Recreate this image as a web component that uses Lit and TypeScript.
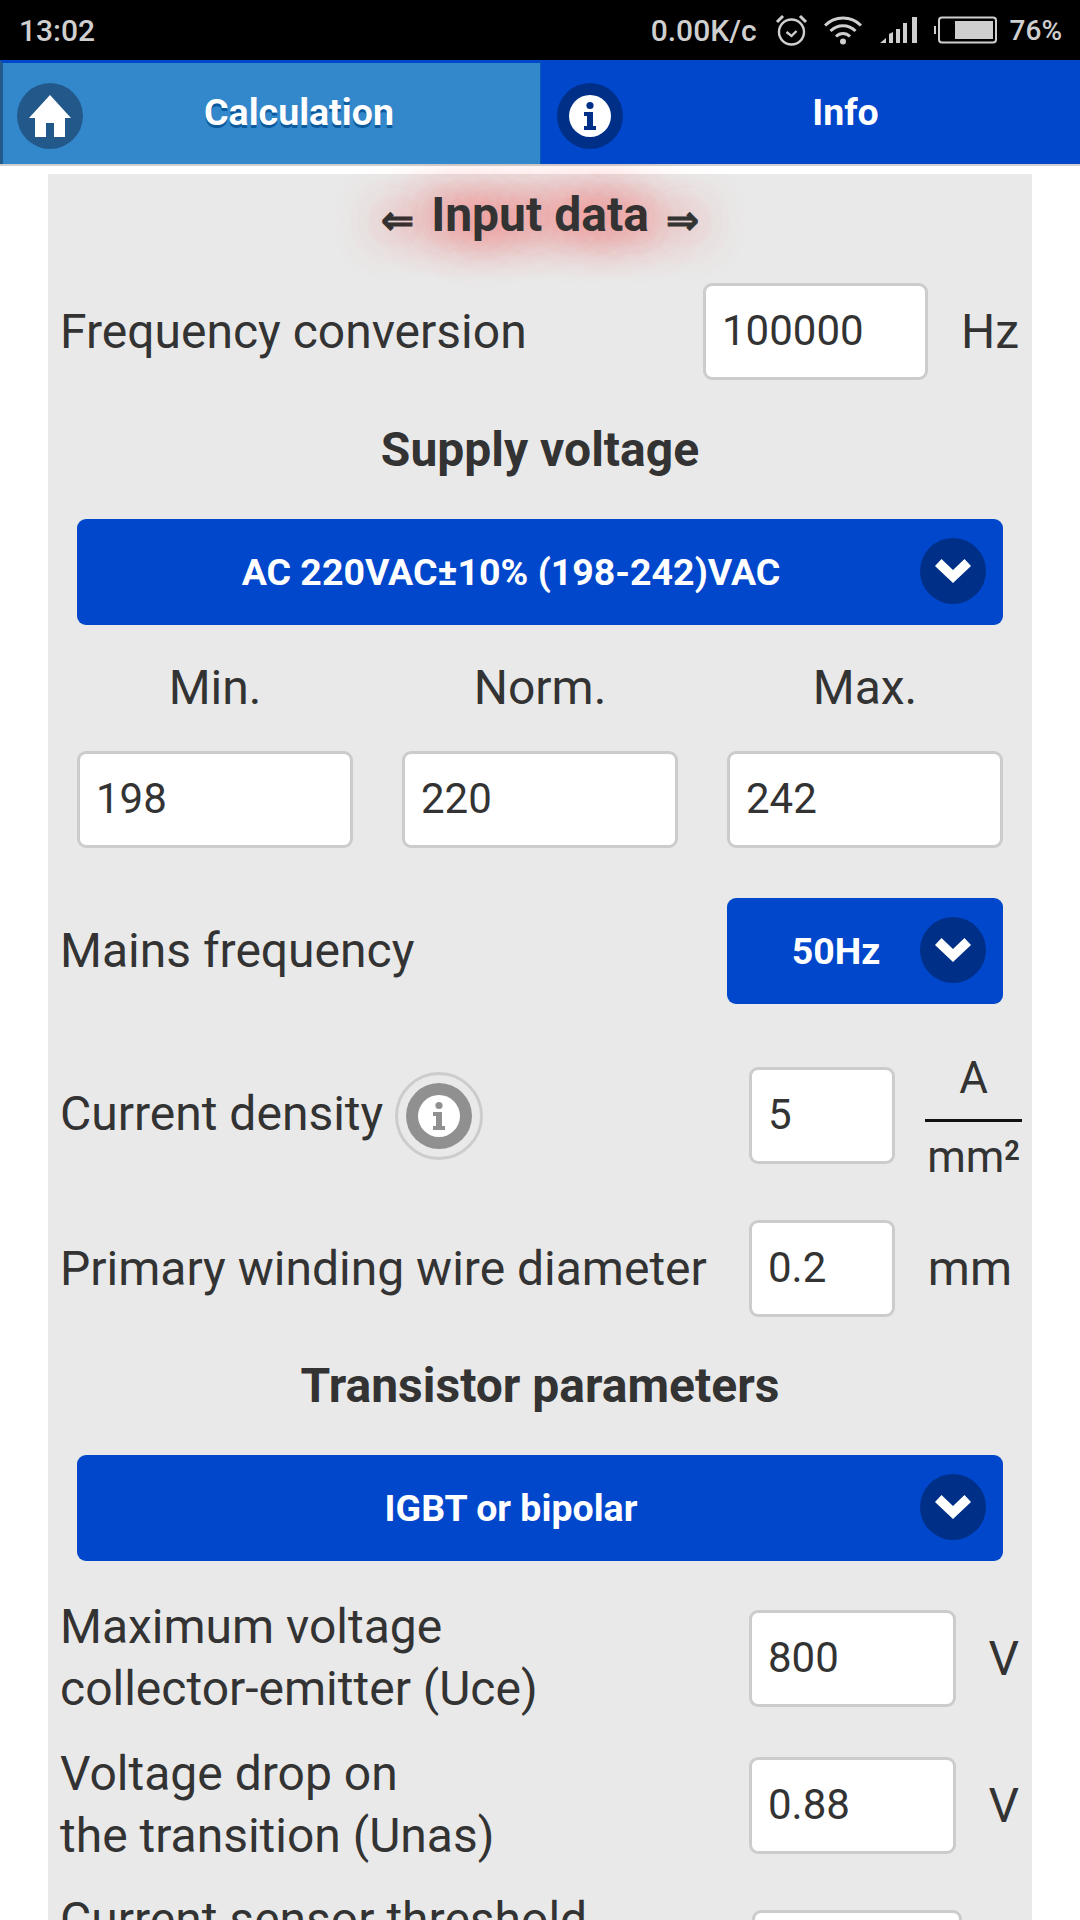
import { LitElement, html, css, svg } from "lit";
import { customElement } from "lit/decorators.js";

const infoGlyph = (bg: string, fg: string) => svg`
  <circle cx="21" cy="21" r="21" fill="${bg}"/>
  <circle cx="21" cy="10.5" r="3.6" fill="${fg}"/>
  <path d="M15 17h9v14h3v4H15v-4h3V21h-3z" fill="${fg}"/>`;

const chevron = html`<span class="chev"><svg width="36" height="24" viewBox="0 0 36 24"><path d="M18 24 0 7l6.5-7L18 11 29.500 0 36 7z" fill="#fff"/></svg></span>`;

@customElement("app-root")
export class AppRoot extends LitElement {
  static styles = css`
    :host { display: block; width: 1080px; height: 1920px; overflow: hidden; background: #fff;
      font-family: Roboto, "Noto Sans", sans-serif; color: #333; font-size: 48px; }
    .status { height: 60px; background: #000; color: #cfcfcf; font-size: 30px; font-weight: 500;
      display: flex; align-items: center; padding: 0 18px 0 19px; box-sizing: border-box; }
    .status .time { margin-right: auto; }
    .status svg { display: block; }
    .speed { margin-right: 18px; }
    .alarm { margin-right: 16px; }
    .wifi { margin-right: 18px; }
    .sig { margin-right: 16px; }
    .batt { margin-right: 12px; }
    .pct { font-size: 28px; }
    .nav { display: flex; height: 106px; box-sizing: border-box; border-bottom: 2px solid #cfcfcf; }
    .tab { flex: 0 0 540px; display: flex; align-items: center; justify-content: center; position: relative;
      box-sizing: border-box; border-top: 3px solid #0047cc; font-weight: 700; font-size: 37.5px; color: #fff; padding-bottom: 3px; }
    .tab.on { background: #3388cc; border-left: 3px solid #22598a; padding-left: 55px; text-shadow: 0 3px 0 #0b5a9e; }
    .tab.off { background: #0047cc; padding-left: 70px; border-left: 1px solid #0a5ab5; }
    .tab .ic { position: absolute; top: 20px; width: 66px; height: 66px; border-radius: 50%;
      display: flex; align-items: center; justify-content: center; }
    .tab.on .ic { left: 14px; background: #22598a; }
    .tab.off .ic { left: 16px; background: #002f87; }
    .gap { height: 8px; }
    .panel { width: 984px; margin-left: 48px; height: 1800px; background: #e9e9e9; display: flex; flex-direction: column; }
    .panel > * { flex: none; }
    .hd { height: 80px; display: flex; align-items: center; justify-content: center; font-weight: 700; font-size: 48px;
      text-shadow: 0 0 40px rgba(255,70,70,.55), 0 0 44px rgba(255,70,70,.55), 0 0 48px rgba(255,70,70,.5); }
    .hd .arr { font-family: "DejaVu Sans", sans-serif; font-weight: 700; font-size: 40px; margin: 11px 17px 0; -webkit-text-stroke: .8px #333; }
    .title { height: 60px; display: flex; align-items: center; justify-content: center; font-weight: 700; font-size: 48px; }
    .row { display: flex; align-items: center; padding: 0 13px 0 12px; }
    .label { line-height: 62px; letter-spacing: 0; }
    .label.up { padding-bottom: 3px; }
    .field { box-sizing: border-box; height: 97px; border: 3px solid #ccc; border-radius: 9px; background: #fff;
      font: 400 42px Roboto, sans-serif; color: #333; padding: 0 16px 2px; margin: 0; outline: none; display: block; min-width: 0; }
    .push { margin-left: auto; }
    .w225 { width: 225px; }
    .w146 { width: 146px; }
    .w207 { width: 207px; }
    .w210 { width: 210px; margin-right: 57px; }
    .unit { text-align: right; flex: none; }
    .u91 { width: 91px; }
    .u124 { width: 124px; padding-right: 7px; box-sizing: border-box; }
    .u63 { width: 63px; }
    .frac { width: 97px; margin: -13px -3px -17px 30px; flex: none; text-align: center; line-height: 1; font-size: 44px; }
    .frac .a { height: 64px; display: flex; align-items: center; justify-content: center; padding-bottom: 18px; box-sizing: border-box; }
    .frac .b { border-top: 3px solid #111; height: 62px; display: flex; align-items: center; justify-content: center; padding-top: 12px; box-sizing: border-box; }
    .frac sup { font-size: 27px; font-weight: 700; vertical-align: baseline; position: relative; top: -12px; }
    .sel { height: 106px; background: #0047cc; border-radius: 9px; color: #fff; font-weight: 700; font-size: 37.5px;
      display: flex; align-items: center; justify-content: center; padding-right: 58px; box-sizing: border-box; position: relative; flex: none; }
    .sel.wide { margin-left: 29px; margin-right: 29px; }
    .sel.small { width: 276px; }
    .chev { position: absolute; right: 17px; top: 19px; width: 66px; height: 66px; border-radius: 50%; background: #002f87;
      display: flex; align-items: center; justify-content: center; }
    .cols { display: grid; grid-template-columns: repeat(3, 276px); column-gap: 49px; margin-left: 29px; margin-right: 29px; }
    .cols .h { text-align: center; height: 60px; line-height: 60px; }
    .cols .field { width: 100%; }
    .badge { width: 88px; height: 88px; box-sizing: border-box; border-radius: 50%; border: 3px solid #ccc; margin-left: 12px;
      display: flex; align-items: center; justify-content: center; flex: none; }
    .badge span { width: 66px; height: 66px; border-radius: 50%; background: #909090; display: flex; align-items: center; justify-content: center; }
    .m29 { margin-top: 29px; } .m38 { margin-top: 38px; } .m39 { margin-top: 39px; } .m40 { margin-top: 40px; }
    .m33 { margin-top: 33px; } .m50 { margin-top: 50px; } .m63 { margin-top: 63px; } .m56 { margin-top: 56px; }
    .m35 { margin-top: 35px; } .m23 { margin-top: 23px; } .m22 { margin-top: 22px; }
    .late { align-items: flex-start; }
    .late .field { margin-top: 21px; }
    .rp { padding-right: 29px; }
  `;

  render() {
    return html`
      <div class="status">
        <span class="time">13:02</span>
        <span class="speed">0.00K/c</span>
        <svg class="alarm" width="33" height="33" viewBox="0 0 33 33" fill="none" stroke="#cfcfcf" stroke-width="2.4">
          <circle cx="16.500" cy="18" r="12.500"/><path d="M11.500 18l5 4 5-5" /><path d="M2 8l6-6M31 8l-6-6" stroke-width="3"/>
        </svg>
        <svg class="wifi" width="38" height="29" viewBox="0 0 38 29" fill="none" stroke="#cfcfcf" stroke-width="3">
          <path d="M1 9.500C11-.500 27-.500 37 9.500M6.500 15C13.500 8 24.500 8 31.500 15M12 20.500c4-4 10-4 14 0"/>
          <circle cx="19" cy="25.500" r="3" fill="#cfcfcf" stroke="none"/>
        </svg>
        <svg class="sig" width="38" height="26" viewBox="0 0 38 26" fill="#cfcfcf">
          <path d="M0 26l6-5v5zM9 17l4-2v11H9zM16 12h4v14h-4zM23 6h4v20h-4zM32 0h5v26h-5z"/>
        </svg>
        <svg class="batt" width="64" height="28" viewBox="0 0 64 28" fill="none">
          <path d="M1 10v8" stroke="#cfcfcf" stroke-width="2"/>
          <rect x="5" y="1.500" width="57" height="25" rx="3" stroke="#cfcfcf" stroke-width="2"/>
          <rect x="21" y="5" width="38" height="18" fill="#cfcfcf"/>
        </svg>
        <span class="pct">76%</span>
      </div>
      <div class="nav">
        <div class="tab on">
          <span class="ic"><svg width="42" height="42" viewBox="0 0 42 42"><path d="M21 0 42 23h-6v19H25V28h-8v14H6V23H0z" fill="#fff"/></svg></span>
          Calculation
        </div>
        <div class="tab off">
          <span class="ic"><svg width="42" height="42" viewBox="0 0 42 42">${infoGlyph("#fff", "#002f87")}</svg></span>
          Info
        </div>
      </div>
      <div class="gap"></div>
      <div class="panel">
        <div class="hd"><span class="arr">⇐</span><span>Input data</span><span class="arr">⇒</span></div>
        <div class="row m29">
          <span class="label">Frequency conversion</span>
          <input class="field w225 push" value="100000">
          <span class="unit u91">Hz</span>
        </div>
        <div class="title m39">Supply voltage</div>
        <div class="sel wide m40">AC 220VAC±10% (198-242)VAC ${chevron}</div>
        <div class="cols m33">
          <div class="h">Min.</div><div class="h">Norm.</div><div class="h">Max.</div>
        </div>
        <div class="cols m33">
          <input class="field" value="198"><input class="field" value="220"><input class="field" value="242">
        </div>
        <div class="row rp m50">
          <span class="label">Mains frequency</span>
          <div class="sel small push">50Hz ${chevron}</div>
        </div>
        <div class="row m63">
          <span class="label up">Current density</span>
          <span class="badge"><span><svg width="42" height="42" viewBox="0 0 42 42">${infoGlyph("#fff", "#909090")}</svg></span></span>
          <input class="field w146 push" value="5">
          <div class="frac"><div class="a">A</div><div class="b"><span>mm<sup>2</sup></span></div></div>
        </div>
        <div class="row m56">
          <span class="label">Primary winding wire diameter</span>
          <input class="field w146 push" value="0.2">
          <span class="unit u124">mm</span>
        </div>
        <div class="title m38">Transistor parameters</div>
        <div class="sel wide m40">IGBT or bipolar ${chevron}</div>
        <div class="row m35">
          <span class="label">Maximum voltage<br>collector-emitter (Uce)</span>
          <input class="field w207 push" value="800">
          <span class="unit u63">V</span>
        </div>
        <div class="row m23">
          <span class="label">Voltage drop on<br>the transition (Unas)</span>
          <input class="field w207 push" value="0.88">
          <span class="unit u63">V</span>
        </div>
        <div class="row m22 late">
          <span class="label">Current sensor threshold</span>
          <input class="field w210 push" value="">
        </div>
      </div>
    `;
  }
}
